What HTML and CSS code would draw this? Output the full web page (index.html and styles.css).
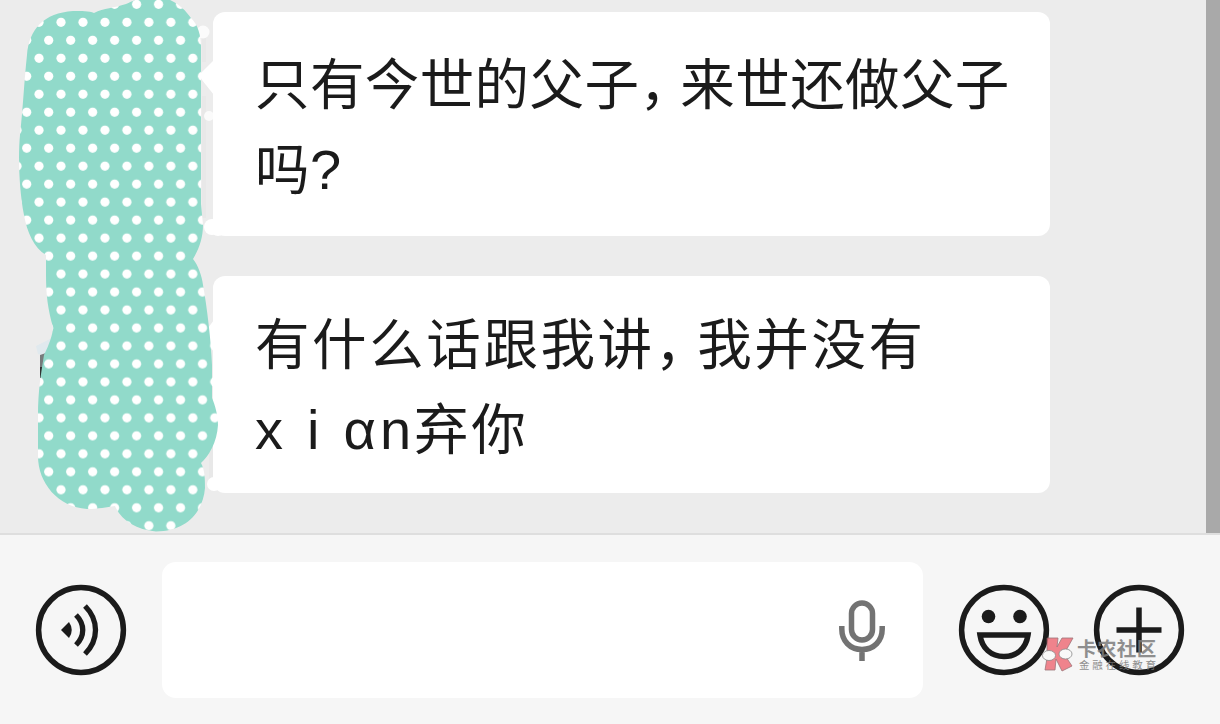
FILE: index.html
```html
<!DOCTYPE html>
<html lang="zh-CN">
	<head>
		<meta charset="utf-8">
		<title>聊天</title>
		<link rel="stylesheet" href="styles.css">
	</head>
	<body>
		<div class="chat">
			<div class="messages">
				<div class="bubble first">
					<p class="line tight">只有今世的父子<span class="comma">，</span>来世还做父子</p>
					<p class="line tight">吗<span class="mark">?</span></p>
				</div>
				<div class="bubble second">
					<p class="line wide">有什么话跟我讲<span class="comma">，</span>我并没有</p>
					<p class="line wide"><span class="latin">x i <span class="alpha">α</span>n</span>弃你</p>
				</div>
			</div>
			<div class="side"></div>
			<!-- 头像遮挡 -->
			<svg class="cover" width="240" height="540" viewBox="0 0 240 540">
				<defs>
					<pattern id="dots" patternUnits="userSpaceOnUse" x="44" y="-5" width="21.97" height="35.96">
						<rect width="22" height="36" fill="#91daca"/>
						<circle cx="4.7" cy="9.3" r="4.6" fill="#fff"/>
						<circle cx="17" cy="27.3" r="4.6" fill="#fff"/>
					</pattern>
				</defs>
				<path d="M204 36V62M204 96V218M211 402V480" stroke="#e8e8e8" stroke-width="4"/>
				<path d="M214 60L201 73Q199 76 202 80L214 95Z" fill="#fff"/>
				<path d="M214 320L208 328V344L214 352Z" fill="#fff"/>
				<g fill="#fff">
					<circle cx="203" cy="32" r="6.5" opacity=".8"/>
					<circle cx="209" cy="116" r="5" opacity=".8"/>
					<circle cx="212" cy="227" r="8"/>
					<circle cx="218" cy="229" r="7"/>
					<circle cx="215" cy="382" r="5"/>
					<circle cx="214" cy="484" r="7"/>
				</g>
				<path d="M36 346L52 338L46 356L38 354Z" fill="#e0e9ee"/>
				<path d="M40 355L46 353L44 365L42.5 378H40Z" fill="#777b7c"/>
				<path d="M40 367H43V378H40Z" fill="#333"/>
				<path d="M94 13C104 8 114 8 126 4C135 0 140 -3 156 -3C172 -3 184 8 191 18C198 25 201 35 201 47V204L203 225C203 238 199 249 193 259C198 265 202 276 203 285C207 307 211 340 212 365V398C215 405 218 415 218 425C217 442 209 456 201 463C205 470 205 480 205 488C203 512 187 531 156 531.500C136 530 121 520 115 506C106 507 99 509 87 509C58 507 38 483 38 456V416C38 390 41 374 44 355C49 345 53 334 53 327C48 310 46 295 46 275V255C34 248 27 232 24 215C19 190 18 155 20 135C23 108 24 83 27 55C29 29 44 13 73 11C82 11 89 11 94 13Z" fill="url(#dots)"/>
			</svg>
		</div>
		<div class="toolbar">
			<svg class="icon" width="92" height="92" viewBox="0 0 92 92">
				<circle cx="46" cy="46" r="42.400" fill="none" stroke="#1b1b1b" stroke-width="5.500"/>
				<path d="M26 46L34 38Q39.500 46 34 54Z" fill="#1b1b1b"/>
				<path d="M41 31C50 40 50 52 41 61M50 22C64 36 64 56 50 70" fill="none" stroke="#1b1b1b" stroke-width="5.300"/>
			</svg>
			<div class="input">
				<svg class="mic" width="48" height="64" viewBox="0 0 48 64" fill="none" stroke="#737373" stroke-width="5.500">
					<rect x="13.500" y="4" width="21" height="37" rx="10.500"/>
					<path d="M3.800 27V30C3.800 42 12 50.500 24 50.500S44.200 42 44.200 30V27M24 50V62"/>
				</svg>
			</div>
			<svg class="icon smile" width="92" height="92" viewBox="0 0 92 92">
				<circle cx="46" cy="46" r="42.400" fill="none" stroke="#1b1b1b" stroke-width="5.500"/>
				<circle cx="30.500" cy="32.500" r="6.800" fill="#1b1b1b"/>
				<circle cx="62" cy="32.500" r="6.800" fill="#1b1b1b"/>
				<path d="M22 51H70C68 64.500 59 72.500 46 72.500S24 64.500 22 51Z" fill="none" stroke="#1b1b1b" stroke-width="5.500"/>
			</svg>
			<svg class="icon plus" width="92" height="92" viewBox="0 0 92 92" fill="none" stroke="#1b1b1b">
				<circle cx="46" cy="46" r="42.400" stroke-width="5.500"/>
				<path d="M23.500 46H68.500M46 23.500V68.500" stroke-width="5.500"/>
			</svg>
		</div>
		<div class="logo">
			<svg width="34" height="36" viewBox="0 0 34 36">
				<path d="M6 2H17L16 11L21 2H32L23 18L31 30L21 35L15 23L14 34H4L6 22Z" fill="#ee6f7a" stroke="#8e6064" stroke-width=".8"/>
				<ellipse cx="8" cy="19.500" rx="6.500" ry="5" fill="#fafafa" stroke="#777" stroke-width=".8"/>
				<ellipse cx="24.500" cy="18" rx="6.500" ry="5" fill="#fafafa" stroke="#777" stroke-width=".8"/>
			</svg>
			<div class="words">
				<p class="name">卡农社区</p>
				<p class="sub">金融在线教育</p>
			</div>
		</div>
	</body>
</html>
```
FILE: styles.css
```css
* {box-sizing: border-box;}
html,body,p {margin: 0;padding: 0;}
body {width: 1220px;height: 724px;overflow: hidden;position: relative;background: #f6f6f6;color: #1b1b1b;font-family: "Noto Sans CJK SC", sans-serif;}
svg {display: block;}

.chat {height: 533px;display: flex;justify-content: space-between;position: relative;background: #ececec;}
.messages {display: flex;flex-direction: column;gap: 40px;padding: 12px 0 0 213px;}
.bubble {width: 837px;background: #fff;border-radius: 12px;}
.first {height: 224px;padding: 26px 0 0 42px;}
.second {height: 217px;padding: 22px 0 0 42px;}
.line {height: 85px;line-height: 85px;font-size: 54.5px;font-weight: 400;white-space: nowrap;}
.tight {letter-spacing: 0.4px;}
.wide {letter-spacing: 2.6px;}
.comma {letter-spacing: -13.5px;}
.wide .comma {letter-spacing: -12px;}
.mark {font-family: "Liberation Sans", sans-serif;font-size: 56px;}
.latin {margin-right: 3px;font-family: "Liberation Sans", sans-serif;font-size: 56px;letter-spacing: 0;word-spacing: 8.5px;}
.alpha {margin-right: 4px;}
.side {width: 14px;background: #a9a9a9;}
.cover {position: absolute;left: 0;top: 0;}

/* 底部输入栏 */
.toolbar {height: 191px;display: flex;align-items: center;border-top: 2px solid #dedede;background: #f6f6f6;padding-left: 35px;}
.input {width: 761px;height: 136px;margin-left: 35px;border-radius: 14px;background: #fff;display: flex;align-items: center;justify-content: flex-end;padding-right: 37px;}
.mic {margin-top: 2px;}
.smile {margin-left: 35px;}
.plus {margin-left: 43px;}

.logo {position: absolute;left: 1041px;top: 636px;display: flex;gap: 2px;opacity: 0.85;color: #7c7c7c;}
.name {font-size: 19.5px;line-height: 23px;font-weight: 700;letter-spacing: 0.4px;}
.sub {font-size: 10.5px;line-height: 12px;letter-spacing: 2.8px;padding-left: 2px;}
```
